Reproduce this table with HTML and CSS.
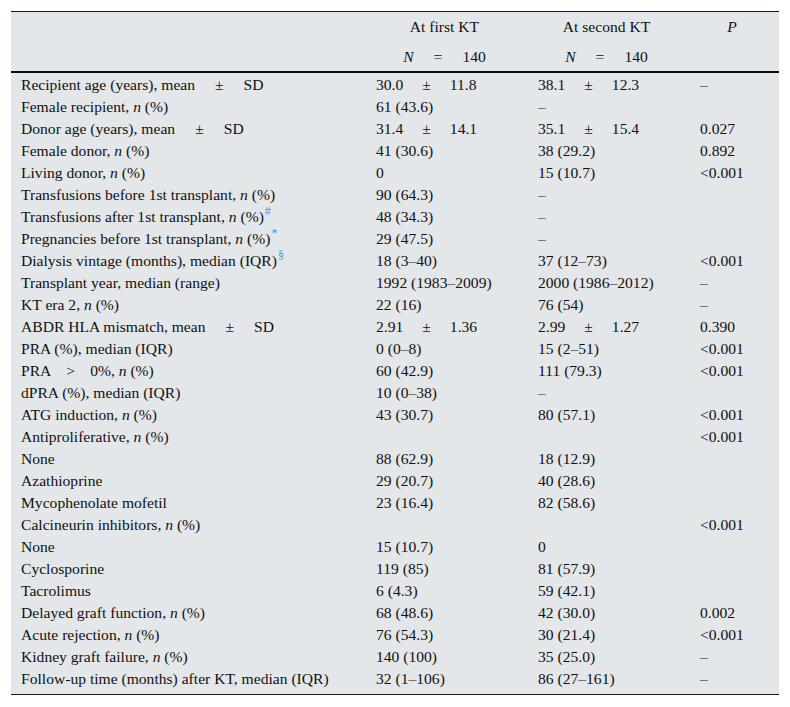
FILE: index.html
```html
<!DOCTYPE html>
<html>
<head>
<meta charset="utf-8">
<link rel="stylesheet" href="styles.css">
</head>
<body>
<table class="data">
  <colgroup>
    <col class="c1"><col class="c2"><col class="c3"><col class="c4">
  </colgroup>
  <thead>
    <tr class="h1"><th></th><th>At first KT</th><th>At second KT</th><th><i>P</i></th></tr>
    <tr class="h2"><th></th><th><i>N</i><span class="eq">=</span>140</th><th><i>N</i><span class="eq">=</span>140</th><th></th></tr>
  </thead>
  <tbody>
    <tr class="first"><td>Recipient age (years), mean<span class="pml">±</span>SD</td><td>30.0<span class="pm">±</span>11.8</td><td>38.1<span class="pm">±</span>12.3</td><td>–</td></tr>
    <tr><td>Female recipient, <i>n</i> (%)</td><td>61 (43.6)</td><td>–</td><td></td></tr>
    <tr><td>Donor age (years), mean<span class="pml">±</span>SD</td><td>31.4<span class="pm">±</span>14.1</td><td>35.1<span class="pm">±</span>15.4</td><td>0.027</td></tr>
    <tr><td>Female donor, <i>n</i> (%)</td><td>41 (30.6)</td><td>38 (29.2)</td><td>0.892</td></tr>
    <tr><td>Living donor, <i>n</i> (%)</td><td>0</td><td>15 (10.7)</td><td>&lt;0.001</td></tr>
    <tr><td>Transfusions before 1st transplant, <i>n</i> (%)</td><td>90 (64.3)</td><td>–</td><td></td></tr>
    <tr><td>Transfusions after 1st transplant, <i>n</i> (%)<sup class="fn">#</sup></td><td>48 (34.3)</td><td>–</td><td></td></tr>
    <tr><td>Pregnancies before 1st transplant, <i>n</i> (%)<sup class="fn">*</sup></td><td>29 (47.5)</td><td>–</td><td></td></tr>
    <tr><td>Dialysis vintage (months), median (IQR)<sup class="fn">§</sup></td><td>18 (3–40)</td><td>37 (12–73)</td><td>&lt;0.001</td></tr>
    <tr><td>Transplant year, median (range)</td><td>1992 (1983–2009)</td><td>2000 (1986–2012)</td><td>–</td></tr>
    <tr><td>KT era 2, <i>n</i> (%)</td><td>22 (16)</td><td>76 (54)</td><td>–</td></tr>
    <tr><td>ABDR HLA mismatch, mean<span class="pml">±</span>SD</td><td>2.91<span class="pm">±</span>1.36</td><td>2.99<span class="pm">±</span>1.27</td><td>0.390</td></tr>
    <tr><td>PRA (%), median (IQR)</td><td>0 (0–8)</td><td>15 (2–51)</td><td>&lt;0.001</td></tr>
    <tr><td>PRA<span class="gt">&gt;</span>0%, <i>n</i> (%)</td><td>60 (42.9)</td><td>111 (79.3)</td><td>&lt;0.001</td></tr>
    <tr><td>dPRA (%), median (IQR)</td><td>10 (0–38)</td><td>–</td><td></td></tr>
    <tr><td>ATG induction, <i>n</i> (%)</td><td>43 (30.7)</td><td>80 (57.1)</td><td>&lt;0.001</td></tr>
    <tr><td>Antiproliferative, <i>n</i> (%)</td><td></td><td></td><td>&lt;0.001</td></tr>
    <tr><td>None</td><td>88 (62.9)</td><td>18 (12.9)</td><td></td></tr>
    <tr><td>Azathioprine</td><td>29 (20.7)</td><td>40 (28.6)</td><td></td></tr>
    <tr><td>Mycophenolate mofetil</td><td>23 (16.4)</td><td>82 (58.6)</td><td></td></tr>
    <tr><td>Calcineurin inhibitors, <i>n</i> (%)</td><td></td><td></td><td>&lt;0.001</td></tr>
    <tr><td>None</td><td>15 (10.7)</td><td>0</td><td></td></tr>
    <tr><td>Cyclosporine</td><td>119 (85)</td><td>81 (57.9)</td><td></td></tr>
    <tr><td>Tacrolimus</td><td>6 (4.3)</td><td>59 (42.1)</td><td></td></tr>
    <tr><td>Delayed graft function, <i>n</i> (%)</td><td>68 (48.6)</td><td>42 (30.0)</td><td>0.002</td></tr>
    <tr><td>Acute rejection, <i>n</i> (%)</td><td>76 (54.3)</td><td>30 (21.4)</td><td>&lt;0.001</td></tr>
    <tr><td>Kidney graft failure, <i>n</i> (%)</td><td>140 (100)</td><td>35 (25.0)</td><td>–</td></tr>
    <tr class="last"><td>Follow-up time (months) after KT, median (IQR)</td><td>32 (1–106)</td><td>86 (27–161)</td><td>–</td></tr>
  </tbody>
</table>
</body>
</html>
```
FILE: styles.css
```css
html, body {
  margin: 0;
  padding: 0;
  background: #ffffff;
}
body {
  font-family: "Liberation Serif", "Times New Roman", serif;
  font-size: 15.6px;
  color: #111111;
}
.data {
  margin: 11px 11px 0 11px;
  width: 768px;
  border-collapse: collapse;
  table-layout: fixed;
  background: #e3e7ea;
  border-top: 1px solid #1a1a1a;
  border-bottom: 1px solid #1a1a1a;
}
.c1 { width: 355px; }
.c2 { width: 162px; }
.c3 { width: 162px; }
.c4 { width: 89px; }
th {
  font-weight: normal;
  text-align: center;
  padding: 0 15px 0 10px;
  white-space: nowrap;
}
.h1 th { height: 30px; }
.h2 th { height: 29px; border-bottom: 2px solid #111; }
td {
  height: 22px;
  padding: 0 0 0 10px;
  white-space: nowrap;
  line-height: 22px;
}
.first td { padding-top: 1px; }
.last td { padding-bottom: 4px; }
.pm { margin: 0 19px; }
.pml { margin: 0 20px; }
.eq { margin: 0 20px; }
.gt { margin: 0 15px; }
.fn {
  color: #3f9ae0;
  font-size: 12px;
  line-height: 0;
  vertical-align: 7px;
  margin-left: 1px;
}
```
